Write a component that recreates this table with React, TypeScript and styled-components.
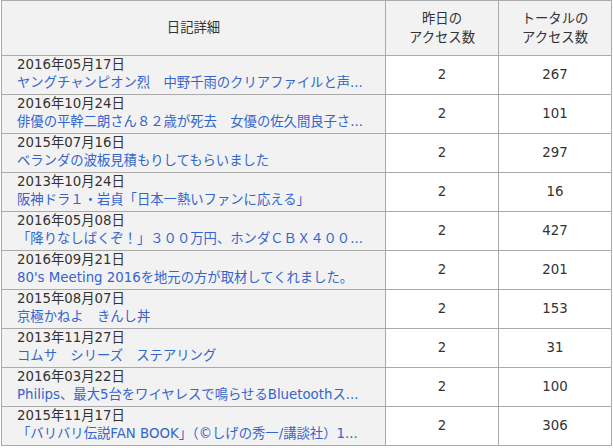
import React from 'react';
import styled, { createGlobalStyle } from 'styled-components';

const GlobalStyle = createGlobalStyle`
  body {
    margin: 0;
    background: #ffffff;
    font-family: 'DejaVu Sans', 'Noto Sans CJK JP', sans-serif;
    color: #333333;
  }
`;

interface Entry {
  date: string;
  title: string;
  yesterday: number;
  total: number;
}

const entries: Entry[] = [
  { date: '2016年05月17日', title: 'ヤングチャンピオン烈　中野千雨のクリアファイルと声...', yesterday: 2, total: 267 },
  { date: '2016年10月24日', title: '俳優の平幹二朗さん８２歳が死去　女優の佐久間良子さ...', yesterday: 2, total: 101 },
  { date: '2015年07月16日', title: 'ベランダの波板見積もりしてもらいました', yesterday: 2, total: 297 },
  { date: '2013年10月24日', title: '阪神ドラ１・岩貞「日本一熱いファンに応える」', yesterday: 2, total: 16 },
  { date: '2016年05月08日', title: '「降りなしばくぞ！」３００万円、ホンダＣＢＸ４００...', yesterday: 2, total: 427 },
  { date: '2016年09月21日', title: "80's Meeting 2016を地元の方が取材してくれました。", yesterday: 2, total: 201 },
  { date: '2015年08月07日', title: '京極かねよ　きんし丼', yesterday: 2, total: 153 },
  { date: '2013年11月27日', title: 'コムサ　シリーズ　ステアリング', yesterday: 2, total: 31 },
  { date: '2016年03月22日', title: 'Philips、最大5台をワイヤレスで鳴らせるBluetoothス...', yesterday: 2, total: 100 },
  { date: '2015年11月17日', title: '「バリバリ伝説FAN BOOK」（©しげの秀一/講談社）1...', yesterday: 2, total: 306 },
];

const Table = styled.div`
  display: grid;
  grid-template-columns: 384px 113px 113px;
  grid-template-rows: 55px;
  grid-auto-rows: 39px;
  width: 610px;
  margin-left: 1px;
  border-left: 1px solid #aaaaaa;
  border-top: 1px solid #aaaaaa;
  font-size: 13.33px;
`;

const Cell = styled.div<{ $head?: boolean; $shade?: boolean }>`
  box-sizing: border-box;
  border-right: 1px solid #aaaaaa;
  border-bottom: 1px solid #aaaaaa;
  background: ${(p) => (p.$head || p.$shade ? '#f2f2f2' : '#ffffff')};
  overflow: hidden;
`;

const HeadCell = styled(Cell)`
  display: flex;
  align-items: center;
  justify-content: center;
  text-align: center;
  line-height: 19px;
  padding-bottom: 1px;
`;

const DetailCell = styled(Cell)`
  padding: 0 8px 0 15px;
  line-height: 18px;
`;

const DateLine = styled.div`
  color: #333333;
  white-space: nowrap;
`;

const TitleLink = styled.a`
  display: block;
  color: #3366cc;
  text-decoration: none;
  white-space: nowrap;
  overflow: hidden;
`;

const NumCell = styled(Cell)`
  display: flex;
  align-items: center;
  justify-content: center;
  padding-bottom: 2px;
`;

export default function App() {
  return (
    <>
      <GlobalStyle />
      <Table>
        <HeadCell $head>日記詳細</HeadCell>
        <HeadCell $head>
          昨日の
          <br />
          アクセス数
        </HeadCell>
        <HeadCell $head>
          トータルの
          <br />
          アクセス数
        </HeadCell>
        {entries.map((e) => (
          <React.Fragment key={e.date + e.total}>
            <DetailCell $shade>
              <DateLine>{e.date}</DateLine>
              <TitleLink href="#">{e.title}</TitleLink>
            </DetailCell>
            <NumCell>{e.yesterday}</NumCell>
            <NumCell>{e.total}</NumCell>
          </React.Fragment>
        ))}
      </Table>
    </>
  );
}
